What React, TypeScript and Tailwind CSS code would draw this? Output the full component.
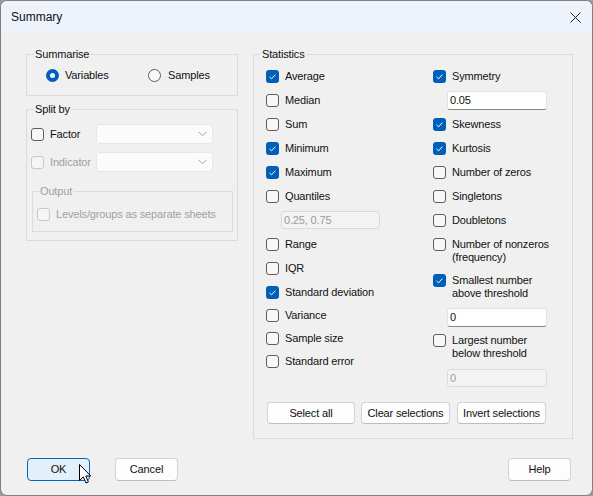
import React from 'react';

const FONT = { fontFamily: '"Liberation Sans", Arial, sans-serif' };

function CheckBox({ checked = false, disabled = false }: { checked?: boolean; disabled?: boolean }) {
    if (checked) {
        return (
            <span className="flex h-[13px] w-[13px] shrink-0 items-center justify-center rounded-[3px] bg-[#005fb8]">
                <svg width="13" height="13" viewBox="0 0 13 13">
                    <path d="M3.6 6.9 L5.6 8.8 L9.4 4.6" fill="none" stroke="#ffffff" strokeWidth="1" />
                </svg>
            </span>
        );
    }
    return (
        <span
            className={
                disabled
                    ? 'h-[13px] w-[13px] shrink-0 rounded-[3px] border border-[#c8c8c8] bg-[#f5f5f5]'
                    : 'h-[13px] w-[13px] shrink-0 rounded-[3px] border border-[#5e5e5e] bg-[#f8f8f8]'
            }
        />
    );
}

function Radio({ checked = false }: { checked?: boolean }) {
    if (checked) {
        return (
            <span className="flex h-[13px] w-[13px] shrink-0 items-center justify-center rounded-full bg-[#005fb8]">
                <span className="h-[5px] w-[5px] rounded-full bg-white" />
            </span>
        );
    }
    return <span className="h-[13px] w-[13px] shrink-0 rounded-full border border-[#5e5e5e] bg-[#f8f8f8]" />;
}

function Row({ label, checked = false, short = false }: { label: string; checked?: boolean; short?: boolean }) {
    return (
        <div className={`flex items-center gap-[6px] ${short ? 'h-[23px]' : 'h-[24px]'}`}>
            <CheckBox checked={checked} />
            <span>{label}</span>
        </div>
    );
}

function TwoLineRow({ lines, checked = false, pt }: { lines: [string, string]; checked?: boolean; pt: string }) {
    return (
        <div className={`flex h-[36px] items-start gap-[6px] ${pt}`}>
            <CheckBox checked={checked} />
            <div className="leading-[13px]">
                <div>{lines[0]}</div>
                <div>{lines[1]}</div>
            </div>
        </div>
    );
}

function TextBox({ value, disabled = false, className = '' }: { value: string; disabled?: boolean; className?: string }) {
    return (
        <div
            className={
                disabled
                    ? `flex items-center rounded-[3px] border border-[#dadada] bg-[#f3f3f3] pl-[2px] text-[#9c9c9c] ${className}`
                    : `flex items-center rounded-[3px] border border-[#e2e2e2] border-b-[#868686] bg-white pl-[2px] text-[#111] ${className}`
            }
        >
            {value}
        </div>
    );
}

function Combo() {
    return (
        <div className="flex h-[20px] w-[117px] items-center justify-end rounded-[3px] border border-[#e6e6e6] bg-[#fbfbfb] pr-[5px]">
            <svg width="9" height="6" viewBox="0 0 9 6">
                <polyline points="0.5,0.8 4.5,4.8 8.5,0.8" fill="none" stroke="#a2a2a2" strokeWidth="1" />
            </svg>
        </div>
    );
}

function Button({ label, className = '' }: { label: string; className?: string }) {
    return (
        <div
            className={`flex items-center justify-center rounded-[4px] border border-[#d2d2d2] border-b-[#bdbdbd] bg-[#fdfdfd] text-[#111] ${className}`}
        >
            {label}
        </div>
    );
}

export default function App() {
    return (
        <div className="h-[496px] w-[593px] bg-[#9b9b9b]">
            <div
                className="relative flex h-[496px] w-[593px] flex-col overflow-hidden rounded-[7px] border border-[#7f7f7f] bg-[#f0f0f0] text-[11px] tracking-[-0.15px] text-[#111]"
                style={FONT}
            >
                {/* Title bar */}
                <div className="flex h-[32px] shrink-0 items-center justify-between bg-[#eef2fa] pl-[10px] pr-[10px]">
                    <span className="text-[12px] tracking-normal">Summary</span>
                    <svg width="11" height="11" viewBox="0 0 11 11" className="mr-[1px]">
                        <path d="M0.5 0.5 L10.5 10.5 M10.5 0.5 L0.5 10.5" stroke="#1c1c1c" strokeWidth="1" />
                    </svg>
                </div>

                {/* Body */}
                <div className="flex flex-1 flex-col pl-[25px] pr-[19px] pt-[14px]">
                    <div className="flex gap-[15px]">
                        {/* Left column */}
                        <div className="flex w-[212px] flex-col gap-[6px]">
                            <fieldset className="border border-[#dcdcdc] px-[7px] pb-[12px]">
                                <legend className="px-[1px] leading-[14px]">Summarise</legend>
                                <div className="mt-[6px] flex h-[16px] items-center">
                                    <div className="ml-[12px] flex w-[102px] items-center gap-[6px]">
                                        <Radio checked />
                                        <span>Variables</span>
                                    </div>
                                    <div className="flex items-center gap-[7px]">
                                        <Radio />
                                        <span>Samples</span>
                                    </div>
                                </div>
                            </fieldset>

                            <fieldset className="border border-[#dcdcdc] pb-[8px] pl-[4px]">
                                <legend className="ml-[3px] px-[1px] leading-[14px]">Split by</legend>
                                <div className="mt-[8px] flex flex-col gap-[8px]">
                                    <div className="flex h-[20px] items-center">
                                        <div className="flex w-[65px] items-center gap-[6px]">
                                            <CheckBox />
                                            <span>Factor</span>
                                        </div>
                                        <Combo />
                                    </div>
                                    <div className="flex h-[20px] items-center">
                                        <div className="flex w-[65px] items-center gap-[6px]">
                                            <CheckBox disabled />
                                            <span className="text-[#a0a0a0]">Indicator</span>
                                        </div>
                                        <Combo />
                                    </div>
                                </div>
                                <fieldset className="ml-[1px] mt-[12px] w-[201px] border border-[#dcdcdc] pb-[9px] pl-[4px]">
                                    <legend className="ml-[2px] px-[1px] leading-[14px] text-[#a0a0a0]">Output</legend>
                                    <div className="mt-[8px] flex h-[16px] items-center gap-[6px]">
                                        <CheckBox disabled />
                                        <span className="text-[#a0a0a0]">Levels/groups as separate sheets</span>
                                    </div>
                                </fieldset>
                            </fieldset>
                        </div>

                        {/* Statistics */}
                        <fieldset className="w-[320px] border border-[#dcdcdc] pb-[14px] pl-[7px]">
                            <legend className="px-[1px] leading-[14px]">Statistics</legend>
                            <div className="ml-[5px] mt-[3px] flex">
                                <div className="flex w-[167px] flex-col">
                                    <Row label="Average" checked />
                                    <Row label="Median" />
                                    <Row label="Sum" />
                                    <Row label="Minimum" checked />
                                    <Row label="Maximum" checked />
                                    <Row label="Quantiles" />
                                    <div className="flex h-[24px] items-center">
                                        <TextBox value="0.25, 0.75" disabled className="ml-[15px] h-[18px] w-[99px]" />
                                    </div>
                                    <Row label="Range" />
                                    <Row label="IQR" />
                                    <Row label="Standard deviation" checked />
                                    <Row label="Variance" short />
                                    <Row label="Sample size" short />
                                    <Row label="Standard error" short />
                                </div>
                                <div className="flex flex-col">
                                    <Row label="Symmetry" checked />
                                    <div className="flex h-[24px] items-center">
                                        <TextBox value="0.05" className="ml-[14px] h-[19px] w-[100px]" />
                                    </div>
                                    <Row label="Skewness" checked />
                                    <Row label="Kurtosis" checked />
                                    <Row label="Number of zeros" />
                                    <Row label="Singletons" />
                                    <Row label="Doubletons" />
                                    <TwoLineRow lines={['Number of nonzeros', '(frequency)']} pt="pt-[6px]" />
                                    <TwoLineRow lines={['Smallest number', 'above threshold']} checked pt="pt-[6px]" />
                                    <div className="flex h-[26px] items-center">
                                        <TextBox value="0" className="ml-[14px] h-[19px] w-[100px]" />
                                    </div>
                                    <TwoLineRow lines={['Largest number', 'below threshold']} pt="pt-[4px]" />
                                    <div className="flex h-[24px] items-center">
                                        <TextBox value="0" disabled className="ml-[14px] h-[18px] w-[100px]" />
                                    </div>
                                </div>
                            </div>
                            <div className="ml-[6px] mt-[12px] flex gap-[6px]">
                                <Button label="Select all" className="h-[22px] w-[88px]" />
                                <Button label="Clear selections" className="h-[22px] w-[89px]" />
                                <Button label="Invert selections" className="ml-[1px] h-[22px] w-[89px]" />
                            </div>
                        </fieldset>
                    </div>

                    {/* Dialog buttons */}
                    <div className="mt-[19px] flex items-center pl-[1px] pr-[2px]">
                        <div className="flex h-[23px] w-[63px] items-center justify-center rounded-[4px] border border-[#0067c0] bg-[#e3effa]">
                            OK
                        </div>
                        <Button label="Cancel" className="ml-[25px] h-[23px] w-[63px]" />
                        <div className="flex-1" />
                        <Button label="Help" className="h-[23px] w-[63px]" />
                    </div>
                </div>

                {/* Mouse pointer */}
                <svg width="14" height="21" viewBox="0 0 14 21" className="absolute left-[78px] top-[463px]">
                    <path
                        d="M0.5 0.5 L0.5 16.5 L4.3 12.9 L7 19 L9.4 18 L6.8 12 L11.8 12 Z"
                        fill="#ffffff"
                        stroke="#000000"
                        strokeWidth="1"
                        strokeLinejoin="round"
                    />
                </svg>
            </div>
        </div>
    );
}
